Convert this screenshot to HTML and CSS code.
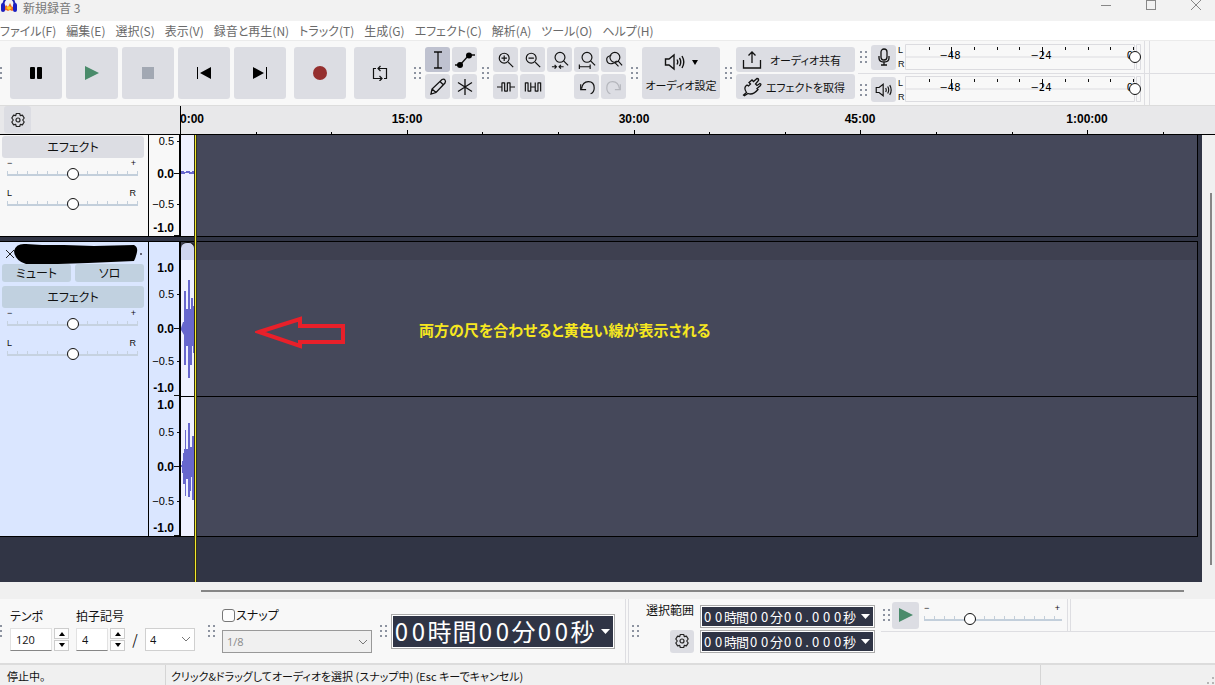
FILE: index.html
```html
<!DOCTYPE html>
<html lang="ja">
<head>
<meta charset="utf-8">
<title>新規録音 3</title>
<link rel="stylesheet" href="styles.css">
</head>
<body>

<!-- shared icons -->
<svg class="defs" width="0" height="0">
	<symbol id="grip" viewBox="0 0 8 12"><path fill="#8d93a0" d="M0 0h2v2H0zM5 0h2v2H5zM0 5h2v2H0zM5 5h2v2H5zM0 10h2v2H0zM5 10h2v2H5z"/></symbol>
	<symbol id="gear" viewBox="0 0 16 16"><g fill="none" stroke="#222" stroke-width="1.2" stroke-linejoin="round"><path d="M6.3 1.5h3.4l.6 2.1 2.1-.5 1.8 2.9L12.7 8l1.5 2-1.8 2.9-2.1-.5-.6 2.1H6.3l-.6-2.1-2.1.5L1.800 10 3.300 8 1.800 6l1.800-2.900 2.100.5z"/><circle cx="8" cy="8" r="2"/></g></symbol>
	<symbol id="speaker" viewBox="0 0 22 18"><g fill="none" stroke="#111" stroke-width="1.4"><path d="M1.500 6H5l5-4v14l-5-4H1.500z"/><path d="M13 6.500q1.500 2.500 0 5M15.500 4.800q2.500 4.200 0 8.400M18 3q3.600 6 0 12"/></g></symbol>
</svg>

<header class="titlebar">
	<svg class="logo" width="18" height="14" viewBox="0 0 18 14"><path d="M3 8Q3-2 9-2T15 8" fill="none" stroke="#1f23b5" stroke-width="2"/><path d="M4 8l2-3 2 2 2-4 2 4 2-1v4l-2 1-2-1-2 1-2-1-2 1z" fill="#f36b21"/><path d="M6 8l3-2 3 2-3 2z" fill="#ffd21c"/><rect x="1" y="3" width="4" height="9" rx="2" fill="#1c1fc0"/><rect x="13" y="3" width="4" height="9" rx="2" fill="#1c1fc0"/></svg>
	<span class="title">新規録音 3</span>
	<div class="winbtns">
		<button aria-label="最小化"><svg width="12" height="12"><path d="M1 6.500h10"/></svg></button>
		<button aria-label="最大化"><svg width="12" height="12"><rect x="1.500" y="1.500" width="9" height="9"/></svg></button>
		<button aria-label="閉じる"><svg width="12" height="12"><path d="M1 1l10 10M11 1L1 11"/></svg></button>
	</div>
</header>

<nav class="menu">
	<a href="#">ファイル(F)</a>
	<a href="#">編集(E)</a>
	<a href="#">選択(S)</a>
	<a href="#">表示(V)</a>
	<a href="#">録音と再生(N)</a>
	<a href="#">トラック(T)</a>
	<a href="#">生成(G)</a>
	<a href="#">エフェクト(C)</a>
	<a href="#">解析(A)</a>
	<a href="#">ツール(O)</a>
	<a href="#">ヘルプ(H)</a>
</nav>

<div class="toolbar">
	<div class="transport">
		<svg class="grip half"><use href="#grip"/></svg>
		<button class="big" aria-label="一時停止"><svg width="16" height="16"><rect x="2" y="2" width="5" height="12" rx="1"/><rect x="9" y="2" width="5" height="12" rx="1"/></svg></button>
		<button class="big" aria-label="再生"><svg width="16" height="16"><path d="M1 1l14 7-14 7z" fill="#4a8b6b"/></svg></button>
		<button class="big" aria-label="停止"><svg width="16" height="16"><path d="M2 2h12v12H2z" fill="#a2a8b3"/></svg></button>
		<button class="big" aria-label="先頭へ"><svg width="16" height="16"><path d="M1 2h1v12H1zM15 2v12L4 8z"/></svg></button>
		<button class="big" aria-label="末尾へ"><svg width="16" height="16"><path d="M14 2h1v12h-1zM1 2v12l11-6z"/></svg></button>
		<button class="big apart" aria-label="録音"><svg width="16" height="16"><circle cx="8" cy="8" r="7" fill="#952f2f"/></svg></button>
		<button class="big apart" aria-label="ループ"><svg width="16" height="16"><path d="M4 3.500H1.500V13.500H10M7.500 11l2.500 2.500L7.500 16M12 13.500h2.500V3.500H6M8.500 1L6 3.500 8.500 6" fill="none" stroke="#111" stroke-width="1.200"/></svg></button>
	</div>
	<svg class="grip"><use href="#grip"/></svg>
	<div class="tools two">
		<button class="on" aria-label="選択ツール"><svg width="20" height="20"><path d="M6 2h3.500L10 3l.5-1H14M10 3v14M6 18h3.500l.5-1 .5 1H14" class="ln"/></svg></button>
		<button aria-label="エンベロープ"><svg width="20" height="20"><path d="M0 15h5L14 5h6" class="ln"/><circle cx="5" cy="15" r="3"/><circle cx="14" cy="5.500" r="3"/></svg></button>
		<button aria-label="描画"><svg width="20" height="20"><path d="M3 17l1-5L14 2.500q2-1 3 .5t0 3L8 15.500zM12 4.500l3.500 3.500M4 12l4 3.500" class="ln"/></svg></button>
		<button aria-label="マルチツール"><svg width="20" height="20"><path d="M10 2v16M3 5.500l14 9M17 5.500l-14 9" class="ln"/></svg></button>
	</div>
	<svg class="grip"><use href="#grip"/></svg>
	<div class="tools five">
		<button aria-label="拡大"><svg width="18" height="18" viewBox="0 0 20 20"><path d="M12.500 12.500L18 18M5 8h6M8 5v6" class="ln"/><circle cx="8" cy="8" r="5.500" class="ln"/></svg></button>
		<button aria-label="縮小"><svg width="18" height="18" viewBox="0 0 20 20"><path d="M12.500 12.500L18 18M5 8h6" class="ln"/><circle cx="8" cy="8" r="5.500" class="ln"/></svg></button>
		<button aria-label="選択範囲に合わせる"><svg width="18" height="18" viewBox="0 0 20 20"><path d="M14 11l5 5M1 17.500h5M9 17.500h5M4 15.500l2 2-2 2M11 15.500l-2 2 2 2" class="ln"/><circle cx="10" cy="7" r="5.500" class="ln"/></svg></button>
		<button aria-label="プロジェクトに合わせる"><svg width="18" height="18" viewBox="0 0 20 20"><path d="M14 11l5 5M1.500 17.500h12M1.500 15v5M13.500 15v5" class="ln"/><circle cx="10" cy="7" r="5.500" class="ln"/></svg></button>
		<button aria-label="ズーム切替"><svg width="18" height="18" viewBox="0 0 20 20"><circle cx="11" cy="7" r="5.500" class="ln"/><path d="M14.500 11l4.500 5M7 5Q1 6 2 10.500t6 3.500q3 0 5-3M11 13l4 4" class="ln"/></svg></button>
		<button aria-label="トリム"><svg width="18" height="18" viewBox="0 0 20 20"><path d="M0 10h5M15 10h5M5.500 5v10M8.500 5v10M11.500 5v10M14.500 5v10M5.500 5.500h3M8.500 14.500h3M11.500 5.500h3" class="ln"/></svg></button>
		<button aria-label="無音化"><svg width="18" height="18" viewBox="0 0 20 20"><path d="M1.500 5v10M4.500 5v10M7.500 5v10M1.500 5.500h3M4.500 14.500h3M7.500 10h5M12.500 5v10M15.500 5v10M18.500 5v10M12.500 14.500h3M15.500 5.500h3" class="ln"/></svg></button>
		<span></span>
		<button aria-label="元に戻す"><svg width="18" height="18" viewBox="0 0 20 20"><path d="M3 7v6h6M4 12q1-8 7.500-8t6.500 7q0 5-4 6.500" class="ln"/></svg></button>
		<button class="off" aria-label="やり直す"><svg width="18" height="18" viewBox="0 0 20 20"><path d="M17 7v6h-6M16 12q-1-8-7.500-8T2 11q0 5 4 6.500" class="ln"/></svg></button>
	</div>
	<svg class="grip"><use href="#grip"/></svg>
	<button class="setup"><span><svg width="22" height="18"><use href="#speaker"/></svg><svg width="6" height="6"><path d="M0 1h6L3 6z"/></svg></span>オーディオ設定</button>
	<svg class="grip"><use href="#grip"/></svg>
	<div class="share">
		<button><svg width="20" height="20"><path d="M1.500 10v8h17v-8M10 13V2M6.500 5.500L10 2l3.500 3.500" class="ln"/></svg><span>オーディオ共有</span></button>
		<button><svg width="20" height="20"><path d="M1 18.500l3.500-3Q1 10.500 5 8l1.500 1 2-2-1.500-1.500L10 3l1.500 1.500L15 1.500q2 0 1.500 2L13.500 7l1.500 1.500 3-2q1.500.5.500 2L15 11.500l1 1q-5 6-10 4L2 19" class="ln"/></svg><span>エフェクトを取得</span></button>
	</div>
	<div class="meters">
		<div class="meterrow">
			<svg class="grip"><use href="#grip"/></svg>
			<button class="sq" aria-label="録音メーター"><svg width="20" height="20"><rect x="7" y="2" width="6" height="11" rx="3" class="ln"/><path d="M5 9v2q0 4 5 4t5-4V9M10 15v3M7 18h6" class="ln"/></svg></button>
			<div class="lr"><span>L</span><span>R</span></div>
			<div class="meter">
				<svg width="236" height="27"><path d="M.5.5h229v25H.500zM.5 13h229M231.500.5h4v25h-4z" fill="none" stroke="#dcdce0"/><path d="M24.500 3v3M46.500 3v9M69.500 3v3M92.500 3v3M114.500 3v3M137.500 3v9M160.500 3v3M183.500 3v3M205.500 3v3M228.500 3v3" stroke="#111"/><text x="45" y="15">−48</text><text x="136" y="15">−24</text><text x="225" y="15">0</text></svg>
				<input type="range" value="100" aria-label="録音レベル">
			</div>
		</div>
		<div class="meterrow">
			<svg class="grip"><use href="#grip"/></svg>
			<button class="sq" aria-label="再生メーター"><svg width="18" height="16"><use href="#speaker"/></svg></button>
			<div class="lr"><span>L</span><span>R</span></div>
			<div class="meter">
				<svg width="236" height="27"><path d="M.5.5h229v25H.500zM.5 13h229M231.500.5h4v25h-4z" fill="none" stroke="#dcdce0"/><path d="M24.500 3v3M46.500 3v9M69.500 3v3M92.500 3v3M114.500 3v3M137.500 3v9M160.500 3v3M183.500 3v3M205.500 3v3M228.500 3v3" stroke="#111"/><text x="45" y="15">−48</text><text x="136" y="15">−24</text><text x="225" y="15">0</text></svg>
				<input type="range" value="100" aria-label="再生レベル">
			</div>
		</div>
	</div>
</div>

<div class="timeline">
	<div class="corner"><button aria-label="タイムライン設定"><svg width="16" height="16"><use href="#gear"/></svg></button></div>
	<svg class="ruler" height="29">
		<path d="M.5 0v29M76.500 26v3M151.500 26v3M227.500 24v5M302.500 26v3M378.500 26v3M454.500 24v5M529.500 26v3M605.500 26v3M680.500 24v5M756.500 26v3M832.500 26v3M907.500 24v5M983.500 26v3" stroke="#000"/>
		<text x="12" y="17">0:00</text><text x="227" y="17">15:00</text><text x="454" y="17">30:00</text><text x="680" y="17">45:00</text><text x="907" y="17">1:00:00</text>
	</svg>
</div>

<main class="work">
	<div class="tracks">
		<section class="track first">
			<div class="panel">
				<button class="fx">エフェクト</button>
				<div class="slide"><div><span>−</span><span>+</span></div><input type="range" aria-label="ゲイン"></div>
				<div class="slide"><div><span>L</span><span>R</span></div><input type="range" aria-label="パン"></div>
			</div>
			<svg class="scale" width="30" height="101">
				<path d="M28 6.500h2M25 38.500h5M28 69.500h2M25 100.500h5" stroke="#111"/>
				<text x="25" y="10">0.5</text><text x="25" y="43" class="b">0.0</text><text x="25" y="73">−0.5</text><text x="25" y="97" class="b">-1.0</text>
			</svg>
			<div class="lane">
				<svg class="clip" width="14" height="101"><path d="M0 36h3v1h2v-1h4v1h2v-1h2v3H8v-1H4v1H0z" fill="#6767cd"/></svg>
			</div>
		</section>
		<section class="track selected">
			<div class="panel">
				<div class="name">
					<svg width="148" height="22"><path d="M6 8l8 8M14 8l-8 8" stroke="#222"/><path d="M14 9q2-8 12-7l16 1 22 0 30 1 40-1q4 2 3 7t-3 9l-46 2-30 1-32 0q-11-3-12-13z" fill="#000"/><path d="M140 11h2v2h-2z" fill="#667"/></svg>
				</div>
				<div class="pair"><button>ミュート</button><button>ソロ</button></div>
				<button class="fx">エフェクト</button>
				<div class="slide"><div><span>−</span><span>+</span></div><input type="range" aria-label="ゲイン"></div>
				<div class="slide"><div><span>L</span><span>R</span></div><input type="range" aria-label="パン"></div>
			</div>
			<svg class="scale" width="30" height="294">
				<path d="M28 52.500h2M25 86.500h5M28 119.500h2M25 153.500h5M28 190.500h2M25 224.500h5M28 259.500h2M25 293.500h5" stroke="#111"/>
				<text x="25" y="30" class="b">1.0</text><text x="25" y="56">0.5</text><text x="25" y="91" class="b">0.0</text><text x="25" y="123">−0.5</text><text x="25" y="150" class="b">-1.0</text>
				<text x="25" y="167" class="b">1.0</text><text x="25" y="194">0.5</text><text x="25" y="229" class="b">0.0</text><text x="25" y="263">−0.5</text><text x="25" y="290" class="b">-1.0</text>
			</svg>
			<div class="lane stereo">
				<div class="channel">
					<div class="cliphead"><i></i></div>
					<svg class="clip" width="14" height="136"><path d="M0 68l2-6h1V31h2v18h2V20h2v29h1V38h2v8h1v47h-1V86h-1v19H9v13H7V86H5v19H3V75l-3-5z" fill="#6767cd"/></svg>
				</div>
				<div class="channel">
					<svg class="clip" width="14" height="139"><path d="M0 68h1v-4h1v-8h1V52h1V33h1v19h2V26h2v24h2V39h2v64h-2V80h-1v14H9v6H7V82H5v17H4V87H2V76H1v-6H0z" fill="#6767cd"/></svg>
				</div>
				<svg class="arrow" width="92" height="34" viewBox="0 0 92 34"><path d="M4 17L45 4v7h43v16H45v4z" fill="none" stroke="#e8202a" stroke-width="4"/></svg>
				<p class="note">両方の尺を合わせると黄色い線が表示される</p>
			</div>
		</section>
		<i class="guide"></i>
	</div>
	<div class="vscroll"><i></i></div>
</main>
<div class="hscroll"><i></i></div>

<div class="bottom">
	<svg class="grip half"><use href="#grip"/></svg>
	<div class="field tempo">
		<label for="tempo">テンポ</label>
		<div class="inline">
			<input id="tempo" class="wide" type="text" value="120">
			<span class="spin"><button aria-label="上げる"><svg width="8" height="5"><path d="M1 5l3-4 3 4z"/></svg></button><button aria-label="下げる"><svg width="8" height="5"><path d="M1 0h6L4 4z"/></svg></button></span>
		</div>
	</div>
	<div class="field sig">
		<label for="upper">拍子記号</label>
		<div class="inline">
			<input id="upper" type="text" value="4">
			<span class="spin"><button aria-label="上げる"><svg width="8" height="5"><path d="M1 5l3-4 3 4z"/></svg></button><button aria-label="下げる"><svg width="8" height="5"><path d="M1 0h6L4 4z"/></svg></button></span>
			<span class="slash">/</span>
			<select aria-label="拍子の分母"><option>4</option></select>
		</div>
	</div>
	<svg class="grip"><use href="#grip"/></svg>
	<div class="field snap">
		<label><input type="checkbox">スナップ</label>
		<select disabled aria-label="スナップ単位"><option>1/8</option></select>
	</div>
	<svg class="grip"><use href="#grip"/></svg>
	<div class="time large">
		<b>0</b><b>0</b><span>時</span><span>間</span><b>0</b><b>0</b><span>分</span><b>0</b><b>0</b><span>秒</span>
		<button aria-label="形式"><svg width="9" height="5"><path d="M0 0h9L4.500 5z"/></svg></button>
	</div>
	<div class="rail"></div>
	<svg class="grip"><use href="#grip"/></svg>
	<div class="range">
		<span>選択範囲</span>
		<button aria-label="選択設定"><svg width="16" height="16"><use href="#gear"/></svg></button>
	</div>
	<div class="times">
		<div class="time">
			<b>0</b><b>0</b><span>時</span><span>間</span><b>0</b><b>0</b><span>分</span><b>0</b><b>0</b><i>.</i><b>0</b><b>0</b><b>0</b><span>秒</span>
			<button aria-label="形式"><svg width="9" height="5"><path d="M0 0h9L4.500 5z"/></svg></button>
		</div>
		<div class="time">
			<b>0</b><b>0</b><span>時</span><span>間</span><b>0</b><b>0</b><span>分</span><b>0</b><b>0</b><i>.</i><b>0</b><b>0</b><b>0</b><span>秒</span>
			<button aria-label="形式"><svg width="9" height="5"><path d="M0 0h9L4.500 5z"/></svg></button>
		</div>
	</div>
	<div class="speed">
		<svg class="grip"><use href="#grip"/></svg>
		<button aria-label="指定速度で再生"><svg width="16" height="16"><path d="M1 1l14 7-14 7z" fill="#4a8b6b"/></svg></button>
		<div class="slide"><div><span>−</span><span>+</span></div><input type="range" value="32" aria-label="再生速度"></div>
		<div class="rail"></div>
	</div>
</div>

<footer class="status">
	<span class="state">停止中。</span>
	<span class="hint">クリック&amp;ドラッグしてオーディオを選択 (スナップ中) (Esc キーでキャンセル)</span>
	<span class="end"><svg width="8" height="8"><path d="M5 0h2v2H5zM5 5h2v2H5zM0 5h2v2H0z" fill="#b5b5b5"/></svg></span>
</footer>

</body>
</html>
```
FILE: styles.css
```css
*{
box-sizing: border-box;
}
html, body{height: 100%;}
body{
margin: 0;
display: flex;
flex-direction: column;
overflow: hidden;
background: #f0f0f0;
color: #111;
font-family: "Noto Sans CJK JP", sans-serif;
font-size: 12px;
line-height: 16px;
font-feature-settings: "palt";
}
svg{
display: block;
flex: none;
}
.defs{
position: absolute;
}
button, input, select{
font: inherit;
font-feature-settings: inherit;
color: inherit;
margin: 0;
padding: 0;
border: 0;
}
button{
display: flex;
align-items: center;
justify-content: center;
background: #dcdde3;
border-radius: 3px;
white-space: nowrap;
}
.ln{
fill: none;
stroke: #111;
stroke-width: 1.3;
}
.grip{
width: 8px;
height: 12px;
margin: 0 3px 0 8px;
}
.grip.half{
margin: 0 7px 0 -5px;
}

/* title and menu */
.titlebar{
display: flex;
height: 21px;
background: #f2f2f2;
color: #777;
}
.title{
margin-left: 5px;
line-height: 16px;
}
.winbtns{
display: flex;
gap: 33px;
margin: -1px 13px 0 auto;
}
.winbtns button{
background: none;
height: 12px;
}
.winbtns svg{
fill: none;
stroke: #888;
}
.menu{
display: flex;
gap: 10px;
height: 20px;
background: #fff;
border-bottom: 1px solid #ebebeb;
}
.menu a{
color: #6a6a6a;
text-decoration: none;
white-space: nowrap;
line-height: 19px;
}

/* top toolbar */
.toolbar{
display: flex;
align-items: center;
height: 64px;
background: #f8f8f8;
}
.transport{
display: flex;
align-items: center;
gap: 4px;
}
.transport .grip{
margin-right: 3px;
}
.big{
width: 52px;
height: 52px;
}
.apart{
margin-left: 4px;
}
.tools + .grip, .setup + .grip{
margin-left: 5px;
}
.tools{
display: grid;
gap: 2px;
}
.two{
grid-template-columns: repeat(2, 25px);
}
.five{
grid-template-columns: repeat(5, 25px);
}
.tools button, .sq{
width: 25px;
height: 25px;
}
.tools .on{
background: #bfc2d0;
}
.off .ln{
stroke: #b4b6bc;
}
.setup{
flex-direction: column;
gap: 6px;
width: 78px;
height: 52px;
font-size: 11px;
}
.setup span{
display: flex;
align-items: center;
gap: 6px;
}
.share{
display: grid;
gap: 2px;
width: 119px;
font-size: 11px;
}
.share button{
height: 25px;
padding: 0 6px;
}
.share span{
flex: 1;
}
.meters{
flex: 1;
align-self: stretch;
margin-left: 3px;
}
.meterrow{
display: flex;
align-items: center;
height: 32px;
}
.meterrow + .meterrow{
border-top: 1px solid #dedee2;
}
.meterrow .grip{
margin-left: 2px;
}
.meterrow::after{
content: "";
align-self: stretch;
width: 4px;
margin-left: 3px;
border: solid #dedee2;
border-width: 0 1px;
}
.lr{
display: grid;
gap: 6px;
width: 9px;
padding-left: 2px;
font: 9px/8px "Liberation Sans", sans-serif;
}
.meter{
position: relative;
}
.meter text{
font: 10px "DejaVu Sans", sans-serif;
text-anchor: middle;
}
.meter input{
position: absolute;
top: 6px;
left: 0;
width: 236px;
background: none;
}

/* sliders */
input[type=range]{
-webkit-appearance: none;
appearance: none;
display: block;
width: 100%;
height: 14px;
background: none;
}
input[type=range]::-webkit-slider-thumb{
-webkit-appearance: none;
width: 12px;
height: 12px;
border: 1px solid #111;
border-radius: 50%;
background: #fff;
}
.slide > div{
display: flex;
justify-content: space-between;
padding: 0 2px 0 0;
font: 9px/8px "Liberation Sans", sans-serif;
}
.slide input{
background:
linear-gradient(#c3cfdb, #c3cfdb) 0 7px / 100% 2px no-repeat,
linear-gradient(to right, #c3cfdb 1px, transparent 1px) 0 4px / 10px 3px repeat-x;
}

/* timeline */
.timeline{
display: flex;
height: 30px;
background: #e8e8ea;
border-top: 1px solid #dcdcdc;
border-bottom: 1px solid #000;
}
.corner{
width: 180px;
padding-left: 4px;
}
.corner button{
width: 27px;
height: 27px;
}
.ruler{
flex: 1;
}
.ruler text, .scale .b{
font: bold 12px "Liberation Sans", sans-serif;
}
.ruler text{
text-anchor: middle;
}

/* tracks */
.work{
display: flex;
flex: 1;
}
.tracks{
position: relative;
flex: 1;
padding-right: 4px;
background: #313545;
}
.track{
display: flex;
height: 102px;
margin-bottom: 4px;
border: solid #000;
border-width: 0 1px 1px 0;
}
.selected{
height: 296px;
border-top-width: 1px;
}
.panel{
width: 148px;
background: #f8f8f8;
}
.panel button{
height: 22px;
}
.fx{
width: 142px;
margin: 1px 2px;
}
.panel .slide{
width: 131px;
margin: 0 0 8px 7px;
}
.selected .panel, .selected .scale{
background: #dae6ff;
}
.selected button{
background: #c1d1e0;
}
.selected .slide input{
background:
linear-gradient(#c6d2e0, #c6d2e0) 0 7px / 100% 2px no-repeat,
linear-gradient(to right, #c6d2e0 1px, transparent 1px) 0 4px / 10px 3px repeat-x;
}
.pair{
display: flex;
gap: 4px;
margin: 0 2px 4px;
}
.pair button{
width: 69px;
height: 18px;
}
.scale{
box-sizing: content-box;
background: #f8f8f8;
border: solid #000;
border-width: 0 2px 0 1px;
}
.scale text{
font: 11px "Liberation Sans", sans-serif;
text-anchor: end;
}
.scale text.b{
font: bold 12px "Liberation Sans", sans-serif;
}
.lane{
position: relative;
flex: 1;
background: #45485a;
}
.clip{
background: #eff1ff;
}
.channel + .channel{
border-top: 1px solid #000;
}
.cliphead{
height: 18px;
background: #3e4050;
}
.cliphead i{
display: block;
width: 14px;
height: 18px;
background: #cfd5f0;
border: 1px solid #111;
border-width: 1px 1px 0 0;
border-radius: 6px 6px 0 0;
}
.arrow{
position: absolute;
left: 74px;
top: 73px;
}
.note{
position: absolute;
left: 238px;
top: 78px;
margin: 0;
color: #f6e71f;
font-size: 15px;
font-weight: bold;
line-height: 20px;
}
.guide{
position: absolute;
top: 0;
bottom: 0;
left: 194px;
width: 3px;
background: #f2ea2c;
border: solid #34321c;
border-width: 0 1px;
}
.vscroll{
width: 13px;
padding: 58px 0 17px 8px;
}
.vscroll i{
display: block;
width: 2px;
height: 100%;
background: #868686;
}
.hscroll{
height: 17px;
padding: 8px 31px 0 201px;
}
.hscroll i{
display: block;
height: 2px;
background: #868686;
}

/* bottom toolbar */
.bottom{
display: flex;
align-items: center;
height: 66px;
background: #f8f8f8;
border-bottom: 2px solid #dcdcdc;
}
.field{
padding-bottom: 6px;
}
.field label{
display: flex;
align-items: center;
height: 20px;
margin-bottom: 2px;
}
.inline{
display: flex;
align-items: center;
}
.field input[type=text]{
width: 32px;
height: 23px;
padding-left: 5px;
background: #fff;
border: 1px solid #e2e2e2;
border-bottom-color: #868686;
font: 11px "Open Sans", sans-serif;
}
.field input.wide{
width: 42px;
}
.spin{
display: grid;
gap: 1px;
margin-left: 2px;
}
.spin button{
width: 15px;
height: 11px;
background: #fdfdfd;
border: 1px solid #ccc;
border-radius: 0;
}
.sig{
margin-left: 7px;
}
.slash{
width: 20px;
font-size: 14px;
text-align: center;
}
.field select{
-webkit-appearance: none;
appearance: none;
width: 50px;
height: 23px;
padding-left: 4px;
border: 1px solid #d0d0d0;
background: #fff url("data:image/svg+xml,%3Csvg xmlns='http://www.w3.org/2000/svg' width='10' height='6'%3E%3Cpath d='M1 1l4 4 4-4' fill='none' stroke='%23777'/%3E%3C/svg%3E") right 3px center no-repeat;
font: 11px "Open Sans", sans-serif;
}
.sig + .grip{
margin-left: 13px;
}
.snap{
padding: 0 0 4px 3px;
}
.snap input{
-webkit-appearance: none;
appearance: none;
width: 13px;
height: 13px;
margin-right: 1px;
border: 1px solid #777;
border-radius: 3px;
background: #fdfdfd;
}
.field.snap label{
margin-bottom: 5px;
}
.snap select{
display: block;
width: 150px;
border-color: #999;
background-color: #f0f0f0;
color: #8a8a8a;
opacity: 1;
}
.time{
display: flex;
align-items: center;
height: 23px;
padding-left: 1px;
background: #2f3445;
border: 1px solid #aaa;
outline: 1px solid #fff;
outline-offset: -2px;
color: #fff;
font-size: 13px;
line-height: 20px;
}
.time b, .time span, .time i{
width: 11px;
font-weight: normal;
font-style: normal;
text-align: center;
}
.time span{
width: 12px;
}
.time i{
width: 6px;
}
.time button{
margin-left: 6px;
background: none;
fill: #fff;
}
.large{
width: 224px;
height: 35px;
padding-left: 1px;
font-size: 24px;
line-height: 30px;
}
.large b{
width: 17px;
}
.large span{
width: 25px;
}
.bottom > .rail{
margin-left: 10px;
}
.rail{
align-self: stretch;
width: 4px;
border: solid #dedee2;
border-width: 0 1px;
}
.rail + .grip{
margin-left: 3px;
}
.range{
display: grid;
justify-items: end;
gap: 12px;
margin-left: 3px;
padding-bottom: 8px;
}
.range button{
width: 24px;
height: 23px;
}
.times{
display: grid;
gap: 2px;
width: 175px;
margin-left: 6px;
padding-bottom: 4px;
}
.speed{
display: flex;
align-items: center;
align-self: flex-start;
flex: 1;
height: 33px;
margin-left: 6px;
border-bottom: 1px solid #dedee2;
}
.speed .grip{
margin: 0 1px 0 2px;
}
.speed button{
width: 27px;
height: 27px;
}
.speed .slide{
width: 138px;
margin: 0 5px 0 5px;
}

/* status bar */
.status{
display: flex;
height: 20px;
line-height: 22px;
font-size: 11px;
white-space: nowrap;
}
.state{
width: 165px;
padding-left: 7px;
}
.hint{
flex: 1;
padding-left: 5px;
border-left: 1px solid #d5d5d5;
}
.end{
display: flex;
justify-content: flex-end;
align-items: flex-end;
width: 175px;
border-left: 1px solid #d5d5d5;
}
```
